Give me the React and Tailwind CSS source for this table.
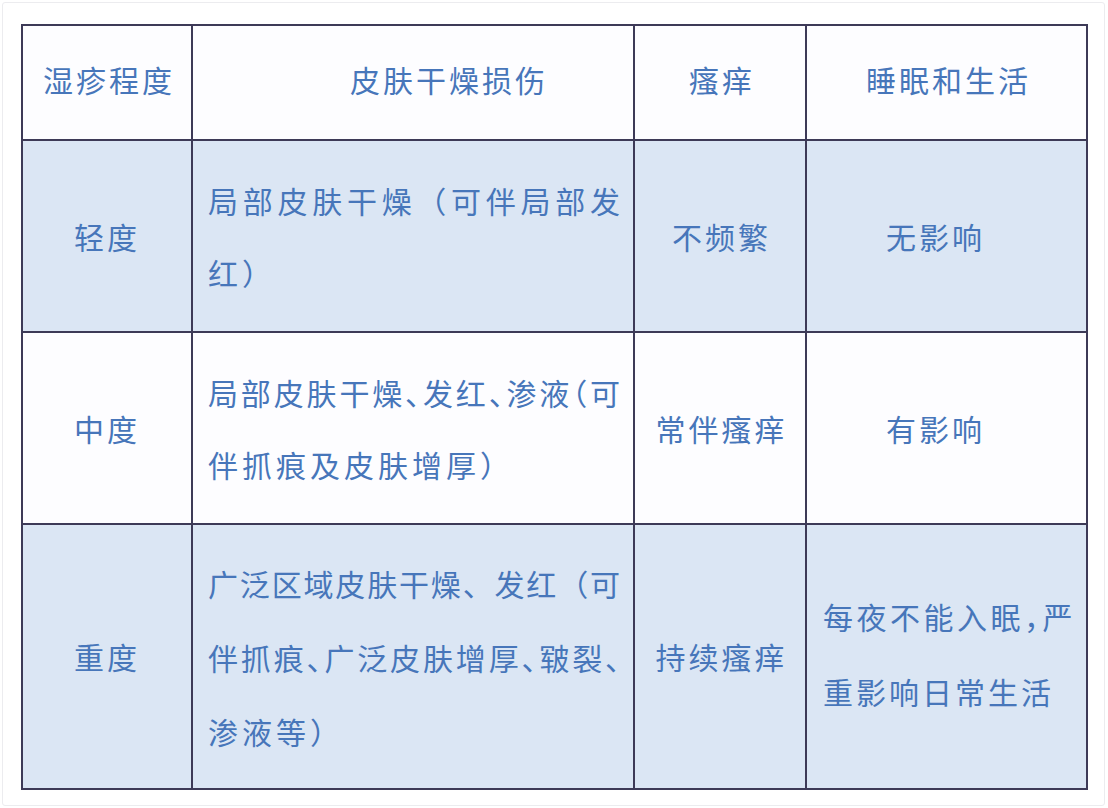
import React from "react";

const P = ({ children }) => (
  <span className="[font-feature-settings:'halt']">{children}</span>
);

const JLine = ({ children }) => (
  <div className="w-[412px] text-justify [text-align-last:justify]">{children}</div>
);

const Line = ({ children }) => <div className="tracking-[4px]">{children}</div>;

export default function App() {
  const cell = "flex items-center border-[#3d3a57]";
  return (
    <div className="w-[1108px] h-[808px] bg-white font-['Noto_Sans_CJK_SC','Noto_Sans',sans-serif] text-[30px] text-[#4776ba]">
      <div className="m-[2px] w-[1103px] h-[804px] rounded-[3px] border border-[#ececef] pt-[21px] pl-[18px]">
        <div className="w-[1067px] border-2 border-[#3d3a57] grid grid-cols-[170px_442px_172px_279px] grid-rows-[115px_192px_192px_263px]">
          {/* header */}
          <div className={`${cell} justify-center border-r-2 border-b-2 bg-[#fdfdff] tracking-[3px] pb-[6px] pl-[4px]`}>湿疹程度</div>
          <div className={`${cell} justify-center border-r-2 border-b-2 bg-[#fdfdff] tracking-[3px] pb-[6px] pl-[72px]`}>皮肤干燥损伤</div>
          <div className={`${cell} justify-center border-r-2 border-b-2 bg-[#fdfdff] tracking-[3px] pb-[6px] pl-[4px]`}>瘙痒</div>
          <div className={`${cell} justify-center border-b-2 bg-[#fdfdff] tracking-[3px] pb-[6px] pl-[4px]`}>睡眠和生活</div>

          {/* row 1 */}
          <div className={`${cell} justify-center border-r-2 border-b-2 bg-[#dbe6f4] tracking-[3px]`}>轻度</div>
          <div className={`${cell} border-r-2 border-b-2 bg-[#dbe6f4] pl-[15px] leading-[72px]`}>
            <div>
              <JLine>局部皮肤干燥（可伴局部发</JLine>
              <Line>红）</Line>
            </div>
          </div>
          <div className={`${cell} justify-center border-r-2 border-b-2 bg-[#dbe6f4] tracking-[3px] pl-[3px]`}>不频繁</div>
          <div className={`${cell} justify-center border-b-2 bg-[#dbe6f4] tracking-[3px] pr-[22px]`}>无影响</div>

          {/* row 2 */}
          <div className={`${cell} justify-center border-r-2 border-b-2 bg-[#fdfdff] tracking-[3px]`}>中度</div>
          <div className={`${cell} border-r-2 border-b-2 bg-[#fdfdff] pl-[15px] leading-[72px]`}>
            <div>
              <JLine>
                局部皮肤干燥<P>、</P>发红<P>、</P>渗液<P>（</P>可
              </JLine>
              <Line>伴抓痕及皮肤增厚）</Line>
            </div>
          </div>
          <div className={`${cell} justify-center border-r-2 border-b-2 bg-[#fdfdff] tracking-[3px] pl-[3px]`}>常伴瘙痒</div>
          <div className={`${cell} justify-center border-b-2 bg-[#fdfdff] tracking-[3px] pr-[22px]`}>有影响</div>

          {/* row 3 */}
          <div className={`${cell} justify-center border-r-2 bg-[#dbe6f4] tracking-[3px]`}>重度</div>
          <div className={`${cell} border-r-2 bg-[#dbe6f4] pl-[15px] leading-[74px]`}>
            <div>
              <JLine>广泛区域皮肤干燥、发红（可</JLine>
              <JLine>
                伴抓痕<P>、</P>广泛皮肤增厚<P>、</P>皲裂<P>、</P>
              </JLine>
              <Line>渗液等）</Line>
            </div>
          </div>
          <div className={`${cell} justify-center border-r-2 bg-[#dbe6f4] tracking-[3px] pl-[3px]`}>持续瘙痒</div>
          <div className={`${cell} bg-[#dbe6f4] pl-[16px] leading-[75px] tracking-[3px] pb-[6px]`}>
            <div>
              <div className="whitespace-nowrap tracking-[3.5px]">
                每夜不能入眠<P>，</P>严
              </div>
              <div>重影响日常生活</div>
            </div>
          </div>
        </div>
      </div>
    </div>
  );
}
